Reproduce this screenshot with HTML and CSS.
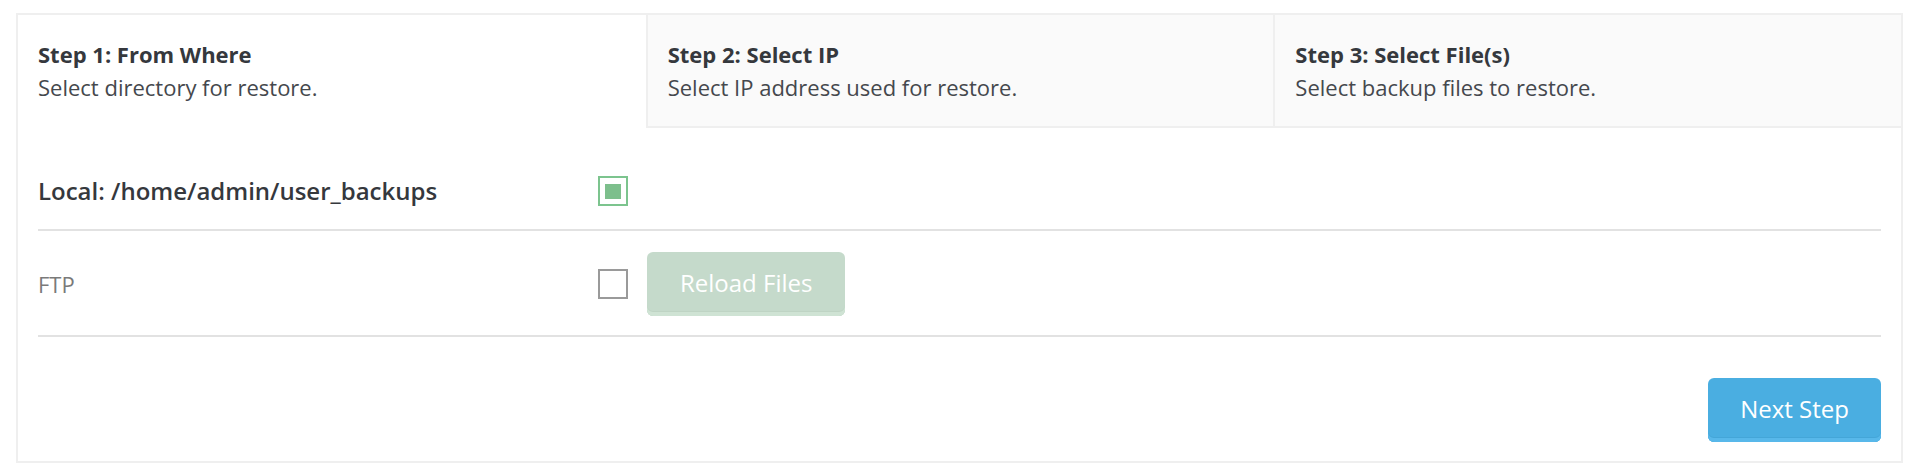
FILE: index.html
```html
<!DOCTYPE html>
<html lang="en">
<head>
<meta charset="utf-8">
<title>Restore Backups</title>
<link rel="stylesheet" href="styles.css">
</head>
<body>
<div class="wizard">
  <div class="tabs">
    <div class="tab tab-active">
      <div class="tab-title">Step 1: From Where</div>
      <div class="tab-sub">Select directory for restore.</div>
    </div>
    <div class="tab">
      <div class="tab-title">Step 2: Select IP</div>
      <div class="tab-sub">Select IP address used for restore.</div>
    </div>
    <div class="tab">
      <div class="tab-title">Step 3: Select File(s)</div>
      <div class="tab-sub">Select backup files to restore.</div>
    </div>
  </div>
  <div class="panel">
    <div class="row row-first">
      <div class="label label-strong">Local: /home/admin/user_backups</div>
      <div class="controls">
        <span class="check check-on"><span class="check-dot"></span></span>
      </div>
    </div>
    <div class="row row-second">
      <div class="label label-muted">FTP</div>
      <div class="controls">
        <span class="check"></span>
        <button class="btn btn-green" type="button">Reload Files</button>
      </div>
    </div>
    <div class="footer">
      <button class="btn btn-blue" type="button">Next Step</button>
    </div>
  </div>
</div>
</body>
</html>
```
FILE: styles.css
```css
html, body {
  margin: 0;
  padding: 0;
  background: #ffffff;
}

body {
  font-family: "Open Sans", "Liberation Sans", sans-serif;
  color: #35383d;
}

.wizard {
  margin: 13px 7px 0 16px;
  border: 2px solid #efefef;
  background: #ffffff;
}

.tabs {
  display: grid;
  grid-template-columns: 1fr 1fr 1fr;
}

.tab {
  padding: 25px 20px 22px;
  background: #fafafa;
  border-left: 2px solid #efefef;
  border-bottom: 2px solid #efefef;
}

.tab-active {
  background: #ffffff;
  border-left: none;
  border-bottom-color: transparent;
}

.tab-title {
  font-size: 22px;
  line-height: 28px;
  font-weight: 700;
  color: #35383d;
  margin-bottom: 3px;
}

.tab-sub {
  font-size: 22px;
  line-height: 33px;
  color: #45484d;
}

.panel {
  padding: 22px 20px 19px;
}

.row {
  display: grid;
  grid-template-columns: 560px 1fr;
  align-items: center;
  border-bottom: 2px solid #e2e2e2;
}

.row-first {
  padding: 20px 0 17px;
  min-height: 42px;
}

.row-second {
  padding: 21px 0 19px;
}

.label {
  font-size: 22px;
  line-height: 30px;
}

.label-strong {
  font-size: 24px;
  font-weight: 600;
  color: #35383d;
}

.label-muted {
  color: #7a7a7a;
}

.controls {
  display: flex;
  align-items: center;
  gap: 19px;
}

.check {
  box-sizing: border-box;
  width: 30px;
  height: 30px;
  border: 2px solid #9a9a9a;
  background: #ffffff;
  display: flex;
  align-items: center;
  justify-content: center;
}

.check-on {
  border-color: #7cc48e;
}

.check-dot {
  width: 16px;
  height: 15px;
  background: #7dbf8c;
}

.btn {
  font-family: "Open Sans", "Liberation Sans", sans-serif;
  font-size: 24px;
  line-height: 30px;
  color: #ffffff;
  border: none;
  border-radius: 6px;
  height: 64px;
  padding: 0 33px 2px;
  cursor: pointer;
}

.btn-green {
  background: #c5dacb;
  box-shadow: inset 0 -4px 0 #cfe3d4, inset 0 -5px 0 #bfd4c4;
}

.btn-blue {
  padding: 0 32px 2px;
  background: #4aaee1;
  box-shadow: inset 0 -4px 0 #58b8ea, inset 0 -5px 0 #44a6d8;
}

.footer {
  display: flex;
  justify-content: flex-end;
  padding-top: 41px;
}
```
